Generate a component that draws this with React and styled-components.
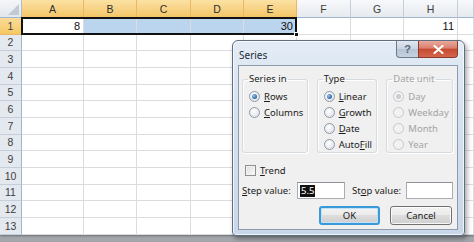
import styled, { createGlobalStyle, css } from "styled-components";

const GlobalStyle = createGlobalStyle`
  html, body {
    margin: 0;
    padding: 0;
    background: #a9acb0;
  }
  * {
    box-sizing: border-box;
  }
`;

const COLS = ["A", "B", "C", "D", "E", "F", "G", "H", ""];
const HOT_COLS = ["A", "B", "C", "D", "E"];
const ROWS = Array.from({ length: 13 }, (_, i) => i + 1);

const VALUES = { A1: "8", E1: "30", H1: "11" };

function App() {
  return (
    <>
      <GlobalStyle />
      <Screen>
        <Sheet>
          <Corner>
            <CornerTriangle />
          </Corner>
          {COLS.map((c, i) => (
            <ColHead key={"h" + i} $c={i + 2} $hot={HOT_COLS.includes(c)}>
              {c}
            </ColHead>
          ))}
          {ROWS.map((r) => (
            <Row key={r} r={r} />
          ))}
          <Selection>
            <FillHandle />
          </Selection>
        </Sheet>

        <Dialog>
          <TitleBar>
            <Title>Series</Title>
            <CaptionButtons>
              <HelpButton>?</HelpButton>
              <CloseButton>
                <svg width="11" height="9" viewBox="0 0 11 9">
                  <path d="M1.5 1 L9.5 8 M9.5 1 L1.5 8" stroke="#fff" strokeWidth="2.2" strokeLinecap="round" />
                </svg>
              </CloseButton>
            </CaptionButtons>
          </TitleBar>

          <Client>
            <Groups>
              <Group $w={66}>
                <Legend>Series in</Legend>
                <Option checked><u>R</u>ows</Option>
                <Option><u>C</u>olumns</Option>
              </Group>
              <Group $w={61}>
                <Legend>Type</Legend>
                <Option checked><u>L</u>inear</Option>
                <Option><u>G</u>rowth</Option>
                <Option><u>D</u>ate</Option>
                <Option>Auto<u>F</u>ill</Option>
              </Group>
              <Group $w={67} $disabled>
                <Legend>Date unit</Legend>
                <Option checked disabled>Day</Option>
                <Option disabled>Weekday</Option>
                <Option disabled>Month</Option>
                <Option disabled>Year</Option>
              </Group>
            </Groups>

            <CheckRow>
              <CheckBox />
              <span><u>T</u>rend</span>
            </CheckRow>

            <FieldRow>
              <FieldLabel $w={55}><u>S</u>tep value:</FieldLabel>
              <TextBox $w={48}>
                <Selected>5.5</Selected>
              </TextBox>
              <FieldLabel $w={54} $ml={7}>St<u>o</u>p value:</FieldLabel>
              <TextBox $w={47} />
            </FieldRow>

            <ButtonRow>
              <PushButton $default>OK</PushButton>
              <PushButton>Cancel</PushButton>
            </ButtonRow>
          </Client>
        </Dialog>
      </Screen>
    </>
  );
}

function Row({ r }) {
  return (
    <>
      <RowHead $r={r + 1} $hot={r === 1}>{r}</RowHead>
      {COLS.map((c, i) => {
        const key = c + r;
        const sel = r === 1 && ["B", "C", "D", "E"].includes(c);
        return (
          <Cell key={key + i} $r={r + 1} $c={i + 2} $sel={sel}>
            {VALUES[key]}
          </Cell>
        );
      })}
    </>
  );
}

function Option({ checked, disabled, children }) {
  return (
    <OptionRow $disabled={disabled}>
      <RadioDot $checked={checked} $disabled={disabled} />
      <span>{children}</span>
    </OptionRow>
  );
}

const uiFont = `"Noto Sans", "Open Sans", sans-serif`;
const cellFont = `"Liberation Sans", Arial, sans-serif`;

const Screen = styled.div`
  position: relative;
  width: 474px;
  height: 242px;
  overflow: hidden;
  background: linear-gradient(#c9ccd0, #a3a7ac);
`;

const Sheet = styled.div`
  display: grid;
  grid-template-columns: 22px 62px 53px 54px 53px 53px 54px 53px 54px 1fr;
  grid-template-rows: 18px repeat(13, 16.67px);
  width: 474px;
  background: #fff;
  font-family: ${cellFont};
  box-shadow: 0 1px 2px rgba(0, 0, 0, 0.35);
`;

const Corner = styled.div`
  grid-row: 1;
  grid-column: 1;
  position: relative;
  background: linear-gradient(#f4f6f9, #e3e7ed);
  border-right: 1px solid #b1bccb;
  border-bottom: 1px solid #9eb6ce;
`;

const CornerTriangle = styled.div`
  position: absolute;
  right: 2px;
  bottom: 2px;
  width: 0;
  height: 0;
  border-left: 11px solid transparent;
  border-bottom: 11px solid #c3cad4;
`;

const ColHead = styled.div`
  grid-row: 1;
  grid-column: ${(p) => p.$c};
  display: flex;
  align-items: center;
  justify-content: center;
  font-size: 10.5px;
  color: #3d3d3d;
  border-right: 1px solid #c5cfdb;
  border-bottom: 1px solid #9eb6ce;
  background: linear-gradient(#f7f9fb, #e6e9ee);
  ${(p) =>
    p.$hot &&
    css`
      background: linear-gradient(#fbe2a3 0%, #f8d58a 45%, #f3c567 100%);
      border-right-color: #e8b864;
      border-bottom: 1px solid #f2a34b;
      color: #2e2e2e;
    `}
`;

const RowHead = styled.div`
  grid-row: ${(p) => p.$r};
  grid-column: 1;
  display: flex;
  align-items: center;
  justify-content: center;
  font-size: 10.5px;
  color: #3d3d3d;
  background: #e4e9ef;
  border-right: 1px solid #9eb6ce;
  border-bottom: 1px solid #c5cfdb;
  ${(p) =>
    p.$hot &&
    css`
      background: linear-gradient(#fadc98, #f5c864);
      border-right-color: #f2a34b;
      border-bottom-color: #e8b864;
    `}
`;

const Cell = styled.div`
  grid-row: ${(p) => p.$r};
  grid-column: ${(p) => p.$c};
  display: flex;
  align-items: center;
  justify-content: flex-end;
  padding-right: 3px;
  font-size: 11px;
  color: #111;
  border-right: 1px solid #dadcdf;
  border-bottom: 1px solid #dadcdf;
  background: ${(p) => (p.$sel ? "#bcd5ef" : "#fff")};
`;

const Selection = styled.div`
  grid-column: 2 / 7;
  grid-row: 2;
  position: relative;
  border: 2px solid #111;
  margin: -1px 0 0 -1px;
  pointer-events: none;
`;

const FillHandle = styled.div`
  position: absolute;
  right: -4px;
  bottom: -4px;
  width: 5px;
  height: 5px;
  background: #111;
  border: 1px solid #fff;
`;

const Dialog = styled.div`
  position: absolute;
  left: 232px;
  top: 40px;
  width: 233px;
  height: 196px;
  display: flex;
  flex-direction: column;
  padding: 0 6px 5px 5px;
  border: 1px solid #5f6e80;
  border-radius: 6px 6px 4px 4px;
  background: linear-gradient(#e3ecf6 0%, #d4e1ef 40%, #c8d7e9 100%);
  box-shadow: 2px 3px 5px rgba(0, 0, 0, 0.35), inset 0 0 0 1px rgba(255, 255, 255, 0.7);
  font-family: ${uiFont};
  font-size: 9.5px;
  color: #1b1b1b;
`;

const TitleBar = styled.div`
  height: 24px;
  display: flex;
  justify-content: space-between;
  align-items: flex-start;
`;

const Title = styled.div`
  padding: 7px 0 0 1px;
  font-size: 10px;
  color: #1e2a38;
`;

const CaptionButtons = styled.div`
  display: flex;
`;

const captionBase = css`
  height: 17px;
  display: flex;
  align-items: center;
  justify-content: center;
  border: 1px solid #6c7a8b;
  border-top: none;
`;

const HelpButton = styled.div`
  ${captionBase}
  width: 22px;
  border-right: none;
  border-radius: 0 0 0 4px;
  background: linear-gradient(#dfe7f0 0%, #c9d4e1 50%, #b5c3d4 51%, #c6d2df 100%);
  color: #56657a;
  font-size: 11px;
  font-weight: bold;
  font-family: ${cellFont};
`;

const CloseButton = styled.div`
  ${captionBase}
  width: 40px;
  border-radius: 0 0 4px 0;
  border-color: #8c3a2e;
  background: linear-gradient(#e9a99b 0%, #d9806f 45%, #c6492f 50%, #d3654b 100%);
`;

const Client = styled.div`
  flex: 1;
  display: flex;
  flex-direction: column;
  background: #f0f0f0;
  border: 1px solid #8c9bad;
  padding: 6px 4px 0 3px;
`;

const Groups = styled.div`
  display: flex;
  gap: 9px;
`;

const Group = styled.fieldset`
  width: ${(p) => p.$w}px;
  height: 81px;
  margin: 0;
  padding: 0 0 0 6px;
  border: 1px solid #d5dadf;
  border-radius: 3px;
  box-shadow: inset 1px 1px 0 #fff, 1px 1px 0 #fff;
  color: ${(p) => (p.$disabled ? "#a3a3a3" : "inherit")};
`;

const Legend = styled.legend`
  padding: 0 1px;
  margin-left: -1px;
  line-height: 14px;
  margin-bottom: 2px;
`;

const OptionRow = styled.div`
  display: flex;
  align-items: center;
  gap: 4px;
  height: 16px;
  color: ${(p) => (p.$disabled ? "#a3a3a3" : "inherit")};
  u {
    text-underline-offset: 1px;
  }
`;

const RadioDot = styled.span`
  position: relative;
  width: 11px;
  height: 11px;
  border-radius: 50%;
  border: 1px solid ${(p) => (p.$disabled ? "#c4c8cc" : "#8e9aa8")};
  background: ${(p) =>
    p.$disabled ? "#f2f2f2" : "radial-gradient(circle at 40% 35%, #ffffff, #dfe3e8 80%)"};
  flex-shrink: 0;
  ${(p) =>
    p.$checked &&
    css`
      &::after {
        content: "";
        position: absolute;
        left: 2px;
        top: 2px;
        width: 5px;
        height: 5px;
        border-radius: 50%;
        background: ${p.$disabled
          ? "#c9cdd2"
          : "radial-gradient(circle at 35% 35%, #8ec0f0, #2a5a95 80%)"};
      }
    `}
`;

const CheckRow = styled.div`
  display: flex;
  align-items: center;
  gap: 4px;
  height: 16px;
  margin-top: 9px;
  padding-left: 3px;
`;

const CheckBox = styled.span`
  width: 11px;
  height: 11px;
  border: 1px solid #8e8f8f;
  background: linear-gradient(135deg, #dcdcdc, #fbfbfb);
  box-shadow: inset 0 0 0 1px #f4f4f4;
`;

const FieldRow = styled.div`
  display: flex;
  align-items: center;
  height: 17px;
  margin-top: 4px;
`;

const FieldLabel = styled.span`
  width: ${(p) => p.$w}px;
  margin-left: ${(p) => p.$ml || 0}px;
`;

const TextBox = styled.div`
  width: ${(p) => p.$w}px;
  height: 17px;
  display: flex;
  align-items: center;
  padding-left: 2px;
  background: #fff;
  border: 1px solid #abadb3;
  border-top-color: #8e9097;
`;

const Selected = styled.span`
  background: #111;
  color: #fff;
  line-height: 12px;
  padding: 0 1px;
`;

const ButtonRow = styled.div`
  display: flex;
  justify-content: flex-end;
  gap: 10px;
  margin-top: 7px;
  padding-right: 1px;
`;

const PushButton = styled.div`
  width: ${(p) => (p.$default ? 61 : 62)}px;
  height: 19px;
  display: flex;
  align-items: center;
  justify-content: center;
  border-radius: 3px;
  border: 1px solid #707070;
  background: linear-gradient(#f2f2f2 0%, #ebebeb 49%, #dddddd 50%, #cfcfcf 100%);
  box-shadow: inset 0 0 0 1px rgba(255, 255, 255, 0.8);
  ${(p) =>
    p.$default &&
    css`
      border: 2px solid #3a9ad9;
      box-shadow: inset 0 0 0 1px #bfe2f8;
    `}
`;

export default App;
